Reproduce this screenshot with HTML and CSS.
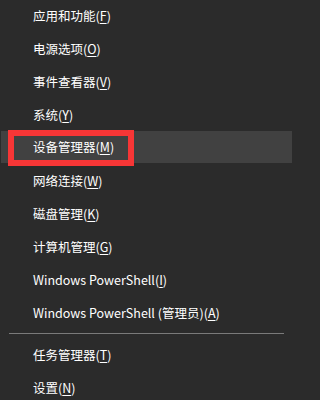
FILE: index.html
```html
<!DOCTYPE html>
<html>
<head>
<meta charset="utf-8">
<link rel="stylesheet" href="styles.css">
</head>
<body>
<div class="menu">
  <div class="item">应用和功能(<u>F</u>)</div>
  <div class="item">电源选项(<u>O</u>)</div>
  <div class="item">事件查看器(<u>V</u>)</div>
  <div class="item">系统(<u>Y</u>)</div>
  <div class="item active">设备管理器(<u>M</u>)<span class="mark"></span></div>
  <div class="item">网络连接(<u>W</u>)</div>
  <div class="item">磁盘管理(<u>K</u>)</div>
  <div class="item">计算机管理(<u>G</u>)</div>
  <div class="item">Windows PowerShell(<u>I</u>)</div>
  <div class="item">Windows PowerShell (管理员)(<u>A</u>)</div>
  <div class="sep"></div>
  <div class="item">任务管理器(<u>T</u>)</div>
  <div class="item">设置(<u>N</u>)</div>
</div>
</body>
</html>
```
FILE: styles.css
```css
html, body {
  margin: 0;
  padding: 0;
  background: #2b2b2b;
  overflow: hidden;
}
.menu {
  box-sizing: border-box;
  width: 293px;
  margin-top: -1px;
  padding-left: 1px;
  padding-right: 1px;
  font-family: "Noto Sans CJK SC", "Noto Sans", sans-serif;
  font-size: 12.5px;
  color: #ffffff;
}
.item {
  position: relative;
  height: 33px;
  line-height: 33px;
  padding-left: 32px;
  white-space: nowrap;
}
.item u {
  text-decoration: underline;
  text-underline-offset: 2px;
  text-decoration-thickness: 1px;
}
.item.active {
  background: #414141;
  height: 32px;
  line-height: 32px;
  margin-bottom: 1px;
}
.mark {
  position: absolute;
  left: 7px;
  top: -1px;
  width: 114px;
  height: 24px;
  border: 6px solid #f73636;
}
.sep {
  height: 1px;
  background: #7a7a7a;
  margin: 4px 8px 4px 8px;
}
```
